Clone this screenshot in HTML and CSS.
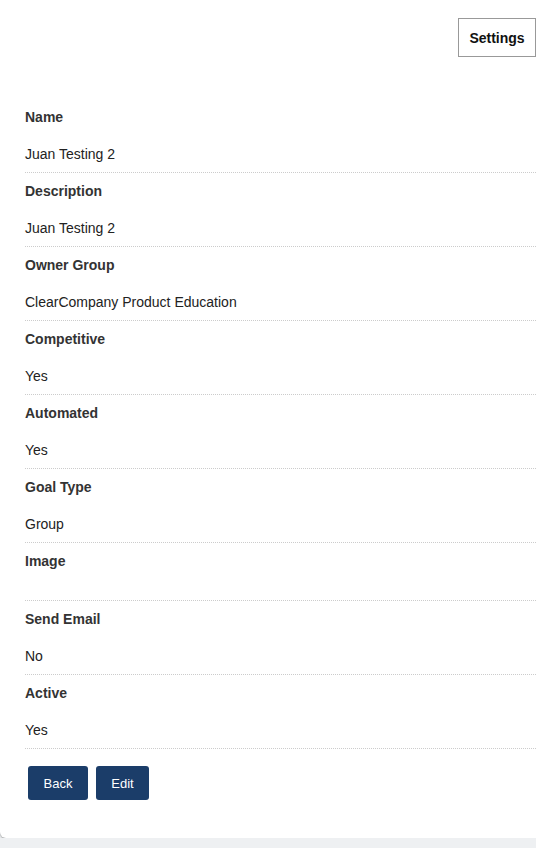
FILE: index.html
```html
<!DOCTYPE html>
<html lang="en">
<head>
    <meta charset="UTF-8">
    <meta name="viewport" content="width=device-width, initial-scale=1.0">
    <title>Goal Details</title>
    <link rel="stylesheet" href="styles.css">
</head>
<body>
    <div class="card">
        <!-- Top Bar -->
        <div class="top-bar">
            <button class="settings-btn">Settings</button>
        </div>

        <!-- Details -->
        <div class="details">
            <div class="row">
                <div class="label">Name</div>
                <div class="value">Juan Testing 2</div>
            </div>
            <div class="row">
                <div class="label">Description</div>
                <div class="value">Juan Testing 2</div>
            </div>
            <div class="row">
                <div class="label">Owner Group</div>
                <div class="value">ClearCompany Product Education</div>
            </div>
            <div class="row">
                <div class="label">Competitive</div>
                <div class="value">Yes</div>
            </div>
            <div class="row">
                <div class="label">Automated</div>
                <div class="value">Yes</div>
            </div>
            <div class="row">
                <div class="label">Goal Type</div>
                <div class="value">Group</div>
            </div>
            <div class="row">
                <div class="label">Image</div>
                <div class="value"></div>
            </div>
            <div class="row">
                <div class="label">Send Email</div>
                <div class="value">No</div>
            </div>
            <div class="row">
                <div class="label">Active</div>
                <div class="value">Yes</div>
            </div>
        </div>

        <div class="actions">
            <button class="btn btn-back">Back</button>
            <button class="btn btn-edit">Edit</button>
        </div>
    </div>
</body>
</html>
```

FILE: styles.css
```css
body {
    margin: 0;
    font-family: "Liberation Sans", Arial, sans-serif;
    background-color: #eef0f2;
    overflow: hidden;
}
.card {
    background-color: #fff;
    height: 838px;
    margin-right: -10px;
    border-bottom-left-radius: 6px;
    box-shadow: 0 1px 2px rgba(0, 0, 0, 0.35);
    box-sizing: border-box;
}
.top-bar {
    display: flex;
    justify-content: flex-end;
    padding: 18px 10px 0 0;
    height: 99px;
    box-sizing: border-box;
}
.settings-btn {
    width: 78px;
    height: 39px;
    background-color: #fff;
    border: 1px solid #999;
    font-family: "Liberation Sans", Arial, sans-serif;
    font-size: 14px;
    font-weight: bold;
    color: #111;
    padding: 0;
}
.details {
    padding-left: 25px;
}
.row {
    border-bottom: 1px dotted #ccc;
}
.label {
    padding-top: 10px;
    line-height: 17px;
    font-size: 14px;
    font-weight: bold;
    color: #333;
}
.value {
    padding: 20px 0 10px;
    line-height: 16px;
    font-size: 14px;
    color: #222;
}
.value:empty {
    padding-bottom: 10px;
}
.actions {
    display: flex;
    gap: 8px;
    padding: 17px 0 0 28px;
}
.btn {
    height: 34px;
    padding: 0;
    background-color: #1b3d69;
    border: none;
    border-radius: 3px;
    color: #fff;
    font-family: "Liberation Sans", Arial, sans-serif;
    font-size: 13px;
}
.btn-back {
    width: 60px;
}
.btn-edit {
    width: 53px;
}
```
